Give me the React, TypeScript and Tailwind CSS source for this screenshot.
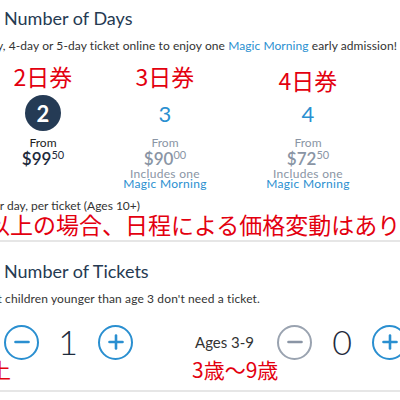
import React from "react";

const ui = { fontFamily: "Lato, 'Noto Sans', sans-serif" };
const jp = { fontFamily: "'Noto Sans CJK JP', sans-serif" };

type Day = {
  label: string;
  num: string;
  dollars: string;
  cents: string;
  selected?: boolean;
  magic?: boolean;
  gap: string;
  labelGap: string;
};

const days: Day[] = [
  { label: "2日券", num: "2", dollars: "$99", cents: "50", selected: true, gap: "ml-[-7px]", labelGap: "mt-0" },
  { label: "3日券", num: "3", dollars: "$90", cents: "00", magic: true, gap: "ml-[22px]", labelGap: "mt-0" },
  { label: "4日券", num: "4", dollars: "$72", cents: "50", magic: true, gap: "ml-[43px]", labelGap: "mt-[4px]" },
];

function DayOption({ d }: { d: Day }) {
  return (
    <div className={`flex w-[100px] shrink-0 flex-col items-center ${d.gap}`}>
      <div className={`h-[26px] text-[23px] leading-[26px] text-[#e3000f] ${d.labelGap}`} style={jp}>
        {d.label}
      </div>
      <div
        className={`flex h-[36px] w-[36px] items-center justify-center rounded-full text-[22px] ${
          d.selected ? "bg-[#253b55] font-bold text-white" : "text-[#2a8fd0]"
        } ${d.label === "4日券" ? "mt-[2px]" : "mt-[6px]"}`}
      >
        {d.num}
      </div>
      <div className={`mt-[5px] text-[12px] leading-[14px] ${d.selected ? "text-[#222]" : "text-[#8a95a5]"}`}>From</div>
      <div
        className={`flex items-start text-[17px] font-semibold leading-[18px] ${
          d.selected ? "text-[#1e2b3c]" : "text-[#8a95a5]"
        }`}
      >
        {d.dollars}
        <span className="mt-[-1px] text-[11px] font-normal leading-[12px]">{d.cents}</span>
      </div>
      {d.magic && (
        <div className="mt-[1px] flex flex-col items-center text-[12px] leading-[10px] tracking-[0.3px]">
          <span className="text-[#8a95a5]">Includes one</span>
          <span className="text-[#2a8fd0]">Magic Morning</span>
        </div>
      )}
    </div>
  );
}

function Round({ kind, active }: { kind: "minus" | "plus"; active: boolean }) {
  const color = active ? "#2a8fd0" : "#8a95a5";
  return (
    <div
      className={`flex h-[35px] w-[35px] shrink-0 items-center justify-center rounded-full border-2 ${
        active ? "border-[#2a8fd0]" : "border-[#9aa3b0]"
      }`}
    >
      <svg width="16" height="16" viewBox="0 0 16 16">
        <line x1="1.5" y1="8" x2="14.5" y2="8" stroke={color} strokeWidth="2.6" strokeLinecap="round" />
        {kind === "plus" && (
          <line x1="8" y1="1.5" x2="8" y2="14.5" stroke={color} strokeWidth="2.6" strokeLinecap="round" />
        )}
      </svg>
    </div>
  );
}

export default function App() {
  return (
    <div className="relative h-[400px] w-[400px] overflow-hidden bg-white" style={ui}>
      {/* Number of days */}
      <section className="pt-[6px]">
        <h2 className="pl-[4px] text-[18px] leading-[24px] text-[#253a52]">Number of Days</h2>
        <div className="mt-[8px] ml-[-300px] w-[697px] whitespace-nowrap text-right text-[12px] leading-[16px] tracking-[0.08px] text-[#333]">
          Buy a 3-day, 4-day or 5-day ticket online to enjoy one{" "}
          <span className="text-[#2a8fd0]">Magic Morning</span> early admission!
        </div>
        <div className="mt-[9px] flex items-start">
          {days.map((d) => (
            <DayOption key={d.num} d={d} />
          ))}
        </div>
        <div className="mt-[10px] ml-[-160px] w-[300px] whitespace-nowrap text-right text-[12px] leading-[14px] text-[#333]">
          Price per day, per ticket (Ages 10+)
        </div>
        <div className="ml-[-13px] mt-[-2px] whitespace-nowrap text-[23px] leading-[26px] text-[#e3000f]" style={jp}>
          以上の場合、日程による価格変動はありません
        </div>
      </section>

      {/* Number of tickets */}
      <section className="mt-[3px] border-y-2 border-[#e6e6e6] pb-[10px]">
        <h2 className="pl-[4px] pt-[17px] text-[18px] leading-[24px] text-[#253a52]">Number of Tickets</h2>
        <div className="mt-[8px] ml-[-140px] w-[400px] whitespace-nowrap text-right text-[12px] leading-[16px] tracking-[0.12px] text-[#333]">
          Please note that children younger than age 3 don't need a ticket.
        </div>
        <div className="mt-[17px] flex items-center">
          <div className="ml-[4px] shrink-0">
            <Round kind="minus" active />
          </div>
          <div className="ml-[19px] w-[20px] shrink-0 text-center text-[34px] font-light leading-[36px] text-[#1e2b3c]">
            1
          </div>
          <div className="ml-[20px] shrink-0">
            <Round kind="plus" active />
          </div>
          <div className="ml-[62px] w-[60px] shrink-0 whitespace-nowrap text-[15px] text-[#333]">Ages 3-9</div>
          <div className="ml-[22px] shrink-0">
            <Round kind="minus" active={false} />
          </div>
          <div className="ml-[20px] w-[20px] shrink-0 text-center text-[34px] font-light leading-[36px] text-[#1e2b3c]">
            0
          </div>
          <div className="ml-[20px] shrink-0">
            <Round kind="plus" active />
          </div>
        </div>
        <div className="mt-[-2px] flex items-start whitespace-nowrap text-[21px] leading-[22px] text-[#e3000f]" style={jp}>
          <span className="ml-[-10px]">上</span>
          <span className="ml-[181px]">3歳～9歳</span>
        </div>
      </section>
    </div>
  );
}
